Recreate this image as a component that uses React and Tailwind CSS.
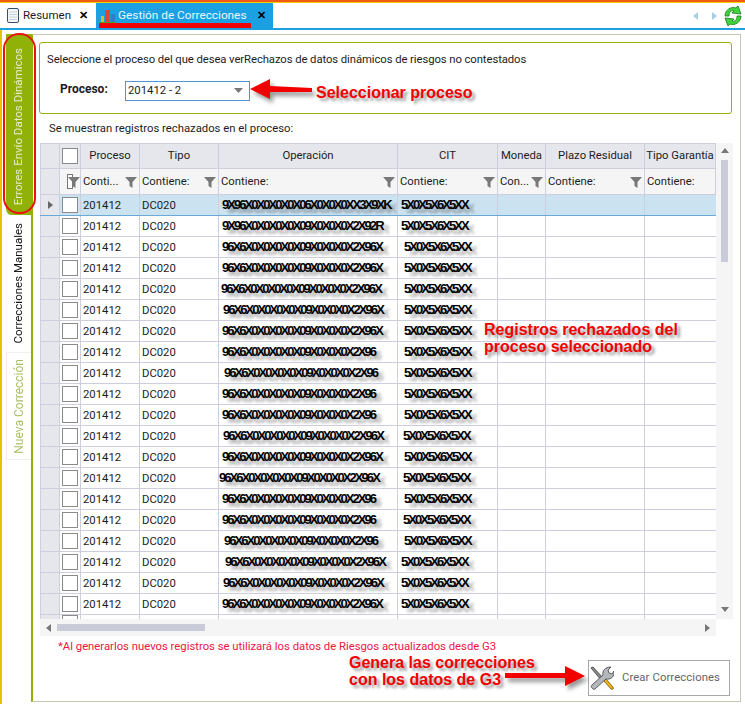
const cols = [
  { w: 'w-[59px]', label: 'Proceso', filter: 'Conti...', v: '201412' },
  { w: 'w-[79px]', label: 'Tipo', filter: 'Contiene:', v: 'DC020' },
  { w: 'w-[179px]', label: 'Operación', filter: 'Contiene:' },
  { w: 'w-[100px]', label: 'CIT', filter: 'Contiene:' },
  { w: 'w-[48px]', label: 'Moneda', filter: 'Con...' },
  { w: 'w-[99px]', label: 'Plazo Residual', filter: 'Contiene:' },
  { w: 'w-[71px]', label: 'Tipo Garantía', filter: 'Contiene:', nofilter: true },
];

const ops = [
  ['9X96X0X0X0X0X06X0X0X0XX3X9XK', 'ml-[3px]'],
  ['9X96X0X0X0X0X09X0X0X0X2X92R', 'ml-[3px]'],
  ['96X6X0X0X0X0X09X0X0X0X2X96X', 'ml-[3px]'],
  ['96X6X0X0X0X0X09X0X0X0X2X96X', 'ml-[3px]'],
  ['96X6X0X0X0X0X09X0X0X0X2X96X', 'ml-[2px]'],
  ['96X6X0X0X0X0X09X0X0X0X2X96X', 'ml-[4px]'],
  ['96X6X0X0X0X0X09X0X0X0X2X96X', 'ml-[3px]'],
  ['96X6X0X0X0X0X09X0X0X0X2X96', 'ml-[3px]'],
  ['96X6X0X0X0X0X09X0X0X0X2X96', 'ml-[5px]'],
  ['96X6X0X0X0X0X09X0X0X0X2X96', 'ml-[3px]'],
  ['96X6X0X0X0X0X09X0X0X0X2X96', 'ml-[3px]'],
  ['96X6X0X0X0X0X09X0X0X0X2X96X', 'ml-[4px]'],
  ['96X6X0X0X0X0X09X0X0X0X2X96X', 'ml-[3px]'],
  ['96X6X0X0X0X0X09X0X0X0X2X96X', 'ml-[0px]'],
  ['96X6X0X0X0X0X09X0X0X0X2X96', 'ml-[3px]'],
  ['96X6X0X0X0X0X09X0X0X0X2X96', 'ml-[3px]'],
  ['96X6X0X0X0X0X09X0X0X0X2X96', 'ml-[5px]'],
  ['96X6X0X0X0X0X09X0X0X0X2X96X', 'ml-[6px]'],
  ['96X6X0X0X0X0X09X0X0X0X2X96X', 'ml-[4px]'],
  ['96X6X0X0X0X0X09X0X0X0X2X96X', 'ml-[3px]'],
];
const cits = ['ml-[3px]','ml-[3px]','ml-[6px]','ml-[6px]','ml-[6px]','ml-[6px]','ml-[6px]','ml-[6px]','ml-[6px]','ml-[6px]','ml-[6px]','ml-[5px]','ml-[6px]','ml-[5px]','ml-[6px]','ml-[5px]','ml-[6px]','ml-[3px]','ml-[3px]','ml-[3px]'];

const maskStyle = { textShadow: '5px 4px 3px rgba(0,0,0,0.3)', fontFamily: '"Liberation Sans", Arial, sans-serif' };

function Funnel() {
  return (
    <svg width="12" height="12" viewBox="0 0 12 12" className="shrink-0">
      <path d="M0 1h12L7.5 6v6l-3-2V6z" fill="#787878" />
    </svg>
  );
}

function Checkbox() {
  return <div className="w-[16px] h-[16px] border border-[#8a8a8a] bg-white" />;
}

function RedArrow({ w, h = 20, left = false }) {
  const d = left
    ? `M0 ${h / 2}L20 0V${h / 2 - 3}L${w} ${h / 2 - 1}V${h / 2 + 3}L20 ${h / 2 + 3}V${h}z`
    : `M${w} ${h / 2}L${w - 20} 0V${h / 2 - 3}H0V${h / 2 + 2}H${w - 20}V${h}z`;
  return (
    <svg width={w} height={h} viewBox={`0 0 ${w} ${h}`} className="overflow-visible" style={{ filter: 'drop-shadow(3px 4px 2px rgba(0,0,0,0.4))' }}>
      <path d={d} fill="#f20000" />
    </svg>
  );
}

function Note({ className, children }) {
  return (
    <div
      className={`absolute font-bold text-[#f20000] leading-[17px] whitespace-pre ${className}`}
      style={{ fontFamily: '"Liberation Sans", Arial, sans-serif', textShadow: '3px 3px 3px rgba(0,0,0,0.4)' }}
    >
      {children}
    </div>
  );
}

function Wrench() {
  return (
    <svg width="24" height="25" viewBox="0 0 24 25" className="shrink-0">
      <path d="M1 2l2-1 11 12-2 2z" fill="#8c8f92" stroke="#333" strokeWidth="0.8" />
      <path d="M13 14l2-2 8 9c1 2-1 3-2 2z" fill="#f2b21b" stroke="#6a5208" strokeWidth="0.8" />
      <path d="M2 22c-1-1-1-2 0-3l11-10c-1-4 2-8 8-8l-3 3 1 3 3 1 2-3c1 5-3 9-8 8L5 23c-1 1-2 0-3-1z" fill="#b4b7bb" stroke="#3d3d3d" strokeWidth="0.8" />
    </svg>
  );
}

export default function App() {
  return (
    <div
      className="relative w-[745px] h-[704px] overflow-hidden bg-white flex flex-col text-[11.3px] text-[#1c1c1c]"
      style={{ fontFamily: 'Roboto, "Noto Sans", sans-serif' }}
    >
      <div className="h-[2px] bg-[#f05a14] shrink-0" />
      <div className="h-[1px] bg-[#f4d000] shrink-0" />

      {/* Tab strip */}
      <div className="h-[25px] shrink-0 flex items-stretch pl-[3px]">
        <div className="w-[93px] flex items-center pl-[4px] text-[11.5px]">
          <svg width="12" height="15" viewBox="0 0 12 15" className="shrink-0">
            <rect x="0.5" y="0.5" width="11" height="14" rx="1.5" fill="#f3f6f8" stroke="#35506a" />
            <path d="M2 4h8M2 6.5h8M2 9h8M2 11.5h8" stroke="#c9d3da" />
          </svg>
          <span className="ml-[4px] w-[56px]">Resumen</span>
          <span className="font-bold text-[11px] leading-none text-black">✕</span>
        </div>
        <div className="relative w-[177px] bg-[#1ba1e2] flex items-center pl-[4px] text-[11.8px] text-[#e8f6ff]">
          <svg width="16" height="16" viewBox="0 0 16 16" className="shrink-0">
            <rect x="1" y="8" width="3" height="7" fill="#d8c020" />
            <rect x="5" y="2" width="5" height="13" fill="#e0453a" />
            <rect x="11" y="6" width="4" height="9" fill="#3b78c8" />
            <rect x="0" y="14" width="16" height="2" fill="#50a030" />
          </svg>
          <span className="ml-[2px] w-[139px] whitespace-nowrap">Gestión de Correcciones</span>
          <span className="font-bold text-[11px] leading-none text-black">✕</span>
          <div className="absolute left-[3px] bottom-0 w-[152px] h-[5px] bg-[#f00000]" />
        </div>
        <div className="flex-1 flex items-center justify-end">
          <svg width="6" height="8" viewBox="0 0 6 8"><path d="M5 0v8L0 4z" fill="#a8cfe6" /></svg>
          <svg width="6" height="8" viewBox="0 0 6 8" className="ml-[12px]"><path d="M1 0v8l5-4z" fill="#a8cfe6" /></svg>
          <svg width="20" height="20" viewBox="0 0 20 20" className="ml-[6px] mr-[2px]">
            <path d="M2 10C2 4 8 0 13 2l2-2 3 8-9-1 2-2C8 4 6 6 6 10z" fill="#3ed43e" stroke="#167a16" strokeWidth="0.8" />
            <path d="M18 10c0 6-6 10-11 8l-2 2-3-8 9 1-2 2c3 1 5-1 5-5z" fill="#3ed43e" stroke="#167a16" strokeWidth="0.8" />
          </svg>
        </div>
      </div>
      <div className="h-[2px] bg-[#1ba1e2] shrink-0" />

      {/* Body */}
      <div className="flex-1 flex min-h-0 border-l-[2px] border-[#e6c200]">
        {/* Vertical tabs */}
        <div className="w-[29px] shrink-0 pt-[4px] pl-[4px] flex flex-col">
          <div className="h-[181px] w-[25px] bg-[#8fb108] flex items-center justify-center rounded-bl-[6px]" style={{ boxShadow: '3px 3px 4px rgba(0,0,0,0.3)' }}>
            <span className="[writing-mode:vertical-rl] rotate-180 whitespace-nowrap text-[#e6edc5] text-[11.5px] mt-[4px]">Errores Envío Datos Dinámicos</span>
          </div>
          <div className="h-[137px] w-[25px] bg-white flex items-center justify-center">
            <span className="[writing-mode:vertical-rl] rotate-180 whitespace-nowrap text-[#111] text-[11.5px]">Correcciones Manuales</span>
          </div>
          <div className="h-[108px] w-[25px] bg-white border border-r-0 border-[#f0f0f0] flex items-center justify-center">
            <span className="[writing-mode:vertical-rl] rotate-180 whitespace-nowrap text-[#a9bf6a] text-[12px]">Nueva Corrección</span>
          </div>
        </div>

        {/* Content */}
        <div className="mt-[4px] mb-[2px] w-[710px] border-l-[2px] border-l-[#8fb108] border-t border-r border-b border-[#c4c8ae] bg-white flex flex-col pl-[6px]">
          <div className="mt-[7px] h-[72px] w-[693px] border border-[#94b30a] rounded-[3px] pl-[7px] pt-[9px] flex flex-col">
            <div className="whitespace-nowrap leading-[16px] tracking-[-0.08px]">Seleccione el proceso del que desea verRechazos de datos dinámicos de riesgos no contestados</div>
            <div className="mt-[12px] flex items-center">
              <span className="ml-[13px] w-[65px] font-bold text-[12px] mb-[3px]">Proceso:</span>
              <div className="w-[125px] h-[20px] border border-[#4f94d4] flex items-center justify-between pl-[2px] pr-[6px]">
                <span className="pt-[1px]">201412 - 2</span>
                <svg width="9" height="5" viewBox="0 0 9 5"><path d="M0 0h9L4.500 5z" fill="#777" /></svg>
              </div>
            </div>
          </div>
          <div className="mt-[7px] ml-[10px] leading-[16px] whitespace-nowrap">Se muestran registros rechazados en el proceso:</div>

          {/* Grid */}
          <div className="mt-[6px] ml-[1px] w-[693px] h-[493px] flex flex-col">
            <div className="flex h-[476px]">
              <div className="w-[676px] h-[476px] overflow-hidden flex flex-col">
                {/* Header */}
                <div className="flex h-[26px] shrink-0 bg-[#e6e7ec] border-t border-b border-[#cdcede]">
                  <div className="w-[20px] shrink-0 border-l border-r border-[#cdcede] bg-[#e6e7ec]" />
                  <div className="w-[21px] shrink-0 border-r border-[#cdcede] flex items-center justify-center"><Checkbox /></div>
                  {cols.map((c) => (
                    <div key={c.label} className={`${c.w} shrink-0 border-r border-[#cdcede] flex items-center justify-center whitespace-nowrap overflow-hidden pt-[1px]`}>{c.label}</div>
                  ))}
                </div>
                {/* Filter row */}
                <div className="flex h-[26px] shrink-0 bg-[#f5f5f6] border-b border-[#cdcede]">
                  <div className="w-[20px] shrink-0 border-l border-r border-[#cdcede] bg-[#e6e7ec]" />
                  <div className="w-[21px] shrink-0 border-r border-[#cdcede] flex items-center pl-[7px] relative">
                    <div className="w-[6px] h-[15px] border border-[#777] bg-white" />
                    <div className="absolute left-[8px] top-[7px]"><Funnel /></div>
                  </div>
                  {cols.map((c) => (
                    <div key={c.label} className={`${c.w} shrink-0 border-r border-[#cdcede] flex items-center justify-between pl-[2px] pr-[2px] overflow-hidden whitespace-nowrap`}>
                      <span className="pt-[2px]">{c.filter}</span>
                      {!c.nofilter && <Funnel />}
                    </div>
                  ))}
                </div>
                {/* Rows */}
                {ops.map(([txt, off], i) => (
                  <div key={i} className={`flex h-[21px] shrink-0 border-b ${i === 0 ? 'bg-[#cbe2f0] border-[#6aa9d8]' : 'bg-white border-[#cdcede]'}`}>
                    <div className="w-[20px] shrink-0 border-l border-r border-[#cdcede] bg-[#e6e7ec] flex items-center justify-center">
                      {i === 0 && <svg width="5" height="8" viewBox="0 0 5 8"><path d="M0 0l5 4-5 4z" fill="#666" /></svg>}
                    </div>
                    <div className="w-[21px] shrink-0 border-r border-[#cdcede] flex items-center justify-center"><Checkbox /></div>
                    <div className="w-[59px] shrink-0 border-r border-[#cdcede] flex items-center pl-[2px] pt-[2px]">201412</div>
                    <div className="w-[79px] shrink-0 border-r border-[#cdcede] flex items-center pl-[2px] pt-[2px]">DC020</div>
                    <div className="w-[179px] shrink-0 border-r border-[#cdcede] flex items-center overflow-hidden">
                      <span className={`${off} font-bold text-black whitespace-nowrap text-[13px] tracking-[-1.95px]`} style={maskStyle}>{txt}</span>
                    </div>
                    <div className="w-[100px] shrink-0 border-r border-[#cdcede] flex items-center overflow-hidden">
                      <span className={`${cits[i]} font-bold text-black whitespace-nowrap text-[13px] tracking-[-1.95px]`} style={maskStyle}>5X0X5X6X5XX</span>
                    </div>
                    <div className="w-[48px] shrink-0 border-r border-[#cdcede]" />
                    <div className="w-[99px] shrink-0 border-r border-[#cdcede]" />
                    <div className="w-[71px] shrink-0" />
                  </div>
                ))}
                <div className="flex h-[10px] shrink-0 bg-white">
                  <div className="w-[20px] shrink-0 border-l border-r border-[#cdcede] bg-[#e6e7ec]" />
                  <div className="w-[21px] shrink-0 border-r border-[#cdcede] flex justify-center"><Checkbox /></div>
                  <div className="w-[59px] shrink-0 border-r border-[#cdcede]" />
                  <div className="w-[79px] shrink-0 border-r border-[#cdcede]" />
                  <div className="w-[179px] shrink-0 border-r border-[#cdcede]" />
                  <div className="w-[100px] shrink-0 border-r border-[#cdcede]" />
                  <div className="w-[48px] shrink-0 border-r border-[#cdcede]" />
                  <div className="w-[99px] shrink-0 border-r border-[#cdcede]" />
                </div>
              </div>
              {/* Vertical scrollbar */}
              <div className="w-[17px] bg-[#f5f5f6] flex flex-col items-center pt-[5px]">
                <svg width="8" height="5" viewBox="0 0 8 5"><path d="M4 0l4 5H0z" fill="#777" /></svg>
                <div className="mt-[7px] w-[7px] h-[102px] bg-[#c9cbd9]" />
                <div className="flex-1" />
                <svg width="8" height="5" viewBox="0 0 8 5" className="mb-[7px]"><path d="M0 0h8L4 5z" fill="#777" /></svg>
              </div>
            </div>
            {/* Horizontal scrollbar */}
            <div className="w-[676px] h-[17px] bg-[#f5f5f6] flex items-center pl-[6px] pr-[6px]">
              <svg width="5" height="8" viewBox="0 0 5 8"><path d="M5 0v8L0 4z" fill="#777" /></svg>
              <div className="ml-[6px] w-[148px] h-[7px] bg-[#c9cbd9]" />
              <div className="flex-1" />
              <svg width="5" height="8" viewBox="0 0 5 8"><path d="M0 0v8l5-4z" fill="#777" /></svg>
            </div>
          </div>

          <div className="mt-[3px] ml-[19px] leading-[16px] text-[#f01440] whitespace-nowrap">*Al generarlos nuevos registros se utilizará los datos de Riesgos actualizados desde G3</div>
          <div className="flex justify-end pr-[10px] mt-[5px]">
            <div className="w-[142px] h-[36px] border border-[#a8a8a8] flex items-center pl-[1px]">
              <Wrench />
              <span className="ml-[8px] text-[#666] whitespace-nowrap tracking-[0.1px]">Crear Correcciones</span>
            </div>
          </div>
        </div>
      </div>

      {/* Annotations over the page */}
      <div className="absolute left-[3px] top-[33px] w-[33px] h-[181px] border-2 border-[#ee1010] rounded-[16px]" />
      <div className="absolute left-[250px] top-[79px]"><RedArrow w={62} h={20} left /></div>
      <Note className="left-[316px] top-[84px] text-[16px]">Seleccionar proceso</Note>
      <Note className="left-[484px] top-[321px] text-[16px]">{'Registros rechazados del\nproceso seleccionado'}</Note>
      <Note className="left-[349px] top-[654px] text-[16px]">{'Genera las correcciones\ncon los datos de G3'}</Note>
      <div className="absolute left-[505px] top-[666px]"><RedArrow w={80} h={20} /></div>
    </div>
  );
}
